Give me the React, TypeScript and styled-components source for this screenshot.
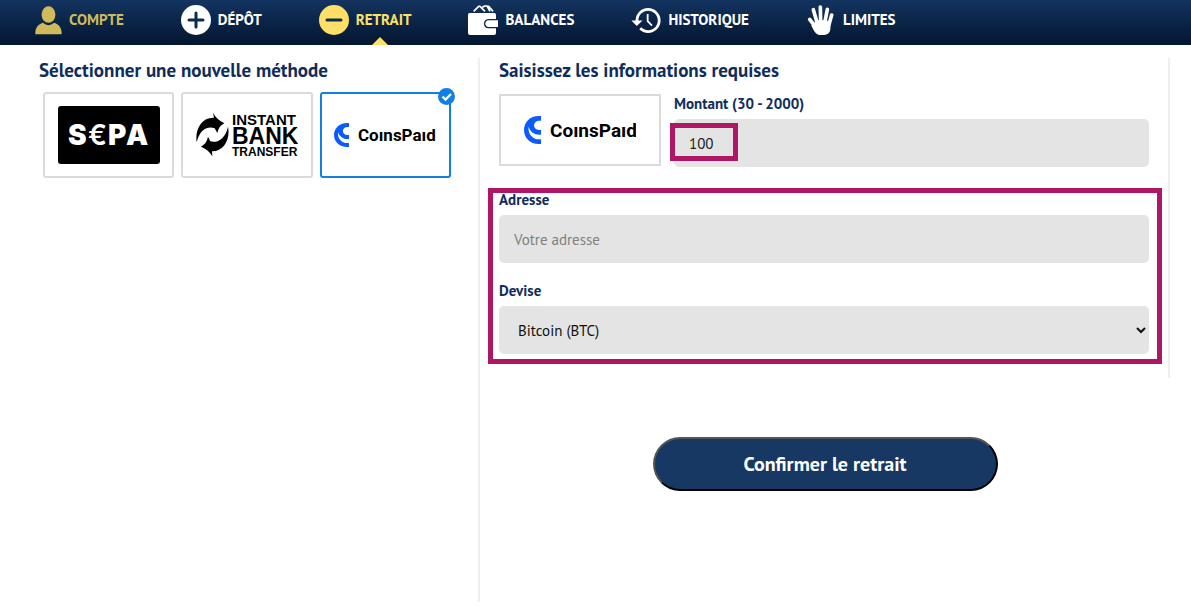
import React, { useState } from "react";
import styled, { createGlobalStyle } from "styled-components";

const navy = "#0f2d5c";
const yellow = "#ffe066";
const magenta = "#ae1765";

const GlobalStyle = createGlobalStyle`
  * { box-sizing: border-box; }
  body {
    margin: 0;
    background: #fff;
    font-family: "PT Sans", Lato, "Noto Sans", sans-serif;
    color: ${navy};
  }
  button, input, select { font-family: inherit; }
`;

const Nav = styled.nav`
  display: flex;
  gap: 57px;
  height: 45px;
  padding: 0 35px;
  background: linear-gradient(#133460, #0b2447 50%, #04162f);
`;

const NavLink = styled.a<{ $color: string }>`
  position: relative;
  display: flex;
  align-items: center;
  gap: 7px;
  height: 40px;
  color: ${(p) => p.$color};
  font-size: 15px;
  font-weight: 700;
  line-height: 20px;
  text-decoration: none;
  white-space: nowrap;
  svg { flex: none; }
`;

const ActiveMark = styled.span`
  position: absolute;
  top: 37px;
  left: 53px;
  border: 8px solid transparent;
  border-top: 0;
  border-bottom-color: ${yellow};
`;

const Main = styled.main`
  display: grid;
  grid-template-columns: 478fr 692fr;
  min-height: calc(100vh - 67px);
  margin: 13px 21px 9px 0;
`;

const Methods = styled.section`
  padding-left: 39px;
`;

const Title = styled.h2`
  margin: 0;
  font-size: 19px;
  font-weight: 700;
  line-height: 24px;
`;

const MethodList = styled.div`
  display: flex;
  gap: 7px;
  padding: 10px 27px 0 4px;
`;

const MethodCard = styled.button<{ $selected: boolean }>`
  position: relative;
  flex: 1;
  display: flex;
  align-items: center;
  justify-content: center;
  height: 86px;
  padding: 0;
  background: #fff;
  border: 2px solid ${(p) => (p.$selected ? "#127fe6" : "#dadada")};
  border-radius: 3px;
`;

const CheckBadge = styled.svg`
  position: absolute;
  top: -6px;
  right: -6px;
`;

const Details = styled.section`
  border-left: 2px solid #eef0f0;
`;

const Form = styled.form`
  padding: 0 19px 24px 19px;
  border-right: 2px solid #eee;
`;

const AmountRow = styled.div`
  display: flex;
  gap: 13px;
  margin: 12px 0 23px;
`;

const LogoBox = styled.div`
  display: flex;
  align-items: center;
  justify-content: center;
  width: 162px;
  height: 72px;
  border: 2px solid #dadada;
`;

const Field = styled.div<{ $grow?: boolean }>`
  position: relative;
  display: flex;
  flex-direction: column;
  gap: 5px;
  flex: ${(p) => (p.$grow ? 1 : "none")};
`;

const FieldGroup = styled.div`
  position: relative;
  display: flex;
  flex-direction: column;
  gap: 18px;
`;

const Label = styled.label`
  font-size: 15px;
  font-weight: 700;
  line-height: 20px;
`;

const Input = styled.input`
  width: 100%;
  height: 48px;
  padding: 0 15px;
  border: 0;
  border-radius: 5px;
  background: #e4e4e4;
  color: #222;
  font-size: 15px;
  &::placeholder { color: #808080; opacity: 1; }
`;

const Select = styled.select`
  width: 100%;
  height: 48px;
  padding: 0 15px;
  border: 0;
  border-radius: 5px;
  background: #e4e4e4;
  color: #111;
  font-size: 15px;
`;

const Highlight = styled.span<{ $inset: string }>`
  position: absolute;
  inset: ${(p) => p.$inset};
  border: 5px solid ${magenta};
  pointer-events: none;
`;

const AmountMark = styled(Highlight)`
  width: 68px;
`;

const Confirm = styled.button`
  display: block;
  width: 50%;
  height: 54px;
  margin: 59px auto 0;
  border: 2px outset #000;
  border-radius: 27px;
  background: #173862;
  color: #fff;
  font-size: 20px;
  font-weight: 700;
`;

const UserIcon = () => (
  <svg width="27" height="29" viewBox="0 0 82 86" fill="currentColor" aria-hidden="true">
    <ellipse cx="41" cy="25" rx="21" ry="25" />
    <path d="M1 85C0 67 8 55 24 50Q41 65 58 50C74 55 82 67 81 85Z" />
  </svg>
);

const CircleIcon = ({ plus }: { plus?: boolean }) => (
  <svg width="30" height="30" viewBox="0 0 30 30" aria-hidden="true">
    <circle cx="15" cy="15" r="15" fill="currentColor" />
    <path
      d={plus ? "M8 15h14M15 8v14" : "M8 15h14"}
      stroke="#0d2a50"
      strokeWidth="3"
      strokeLinecap="round"
    />
  </svg>
);

const WalletIcon = () => (
  <svg width="30" height="30" viewBox="0 0 90 90" aria-hidden="true">
    <path
      d="M17 19L32 4H36L51 19M43 7L50 3H57L66 19M58 4H62L75 19"
      fill="none"
      stroke="currentColor"
      strokeWidth="5"
      strokeLinejoin="round"
    />
    <path d="M5 24H79Q84 24 84 30V84Q84 90 78 90H6Q0 90 0 84V30Q0 24 5 24Z" fill="currentColor" />
    <path d="M92 44H62Q50 45 50 56Q50 67 62 68H92" fill="currentColor" stroke="#0b2447" strokeWidth="4" />
  </svg>
);

const HistoryIcon = () => (
  <svg width="30" height="25" viewBox="1 3 21 18" fill="currentColor" aria-hidden="true">
    <path d="M13 3a9 9 0 0 0-9 9H1l3.9 4L9 12H6c0-3.87 3.13-7 7-7s7 3.13 7 7-3.13 7-7 7c-1.93 0-3.68-.79-4.94-2.06l-1.42 1.42A8.95 8.95 0 0 0 13 21a9 9 0 0 0 0-18z" />
    <path d="M12.7 7.3v5.2l3.1 3.2" fill="none" stroke="currentColor" strokeWidth="1.3" />
  </svg>
);

const HandIcon = () => (
  <svg width="30" height="30" viewBox="-5 0 90 90" aria-hidden="true">
    <path
      d="M6 43L24 66M17 14L28 52M38 6L39 50M59 13L52 50M72 30L63 62"
      fill="none"
      stroke="currentColor"
      strokeWidth="11"
      strokeLinecap="round"
    />
    <path d="M22 46H58L68 58Q72 90 50 90H36Q24 90 15 70L10 60L20 62Z" fill="currentColor" />
  </svg>
);

const SepaLogo = () => (
  <svg width="102" height="58" viewBox="0 0 102 58" role="img" aria-label="SEPA">
    <rect width="102" height="58" rx="3" />
    <g fill="#fff" fontFamily="Inter, sans-serif" fontSize="28">
      <text x="10" y="39" fontWeight="900">S</text>
      <text x="30" y="39" fontWeight="600">€</text>
      <text x="50" y="39" fontWeight="900">P</text>
      <text x="68" y="39" fontWeight="900">A</text>
    </g>
  </svg>
);

const BankLogo = () => (
  <svg width="102" height="46" viewBox="0 0 102 46" role="img" aria-label="Instant Bank Transfer">
    <svg width="34" height="46" viewBox="18 21 102 138">
      <path d="M20 112C14 72 36 36 72 38L69 23C77 38 88 47 103 55C91 61 85 70 82 84L74 70C54 63 30 72 20 112Z" />
      <path d="M114 65C122 103 100 140 66 139L67 154C59 140 48 131 33 125C45 118 51 109 54 95L61 109C82 115 106 102 114 65Z" />
    </svg>
    <g fontFamily="'Liberation Sans', Arial, sans-serif" fontWeight="700">
      <text x="36" y="13" fontSize="15">INSTANT</text>
      <text x="36" y="32" fontSize="23">BANK</text>
      <text x="36" y="44" fontSize="12">TRANSFER</text>
    </g>
  </svg>
);

const CoinsPaidLogo = ({ large }: { large?: boolean }) => (
  <svg
    width={large ? 112 : 102}
    height={large ? 28 : 24}
    viewBox={large ? "0 0 112 28" : "0 0 102 24"}
    role="img"
    aria-label="CoinsPaid"
  >
    <svg width={large ? 17 : 15} height={large ? 28 : 24} viewBox="0 0 49 84" preserveAspectRatio="none">
      <path d="M49 0H42C18 0 0 18 0 42S18 84 42 84H49Z" fill="#0b5cff" />
      <path d="M49 14H44C35 14 29 20 29 28S35 42 44 42H49Z" fill="#fff" />
      <path d="M49 56H44C30 56 18 47 13 32C11 54 25 70 43 70H49Z" fill="#fff" />
    </svg>
    <text
      x={large ? 26 : 24}
      y={large ? 21 : 18}
      fontFamily="Roboto, sans-serif"
      fontWeight="700"
      fontSize={large ? 19 : 17}
    >
      CoınsPaıd
    </text>
  </svg>
);

const navItems = [
  { label: "COMPTE", color: "#cfbb5c", icon: <UserIcon /> },
  { label: "DÉPÔT", color: "#fff", icon: <CircleIcon plus /> },
  { label: "RETRAIT", color: yellow, icon: <CircleIcon />, active: true },
  { label: "BALANCES", color: "#fff", icon: <WalletIcon /> },
  { label: "HISTORIQUE", color: "#fff", icon: <HistoryIcon /> },
  { label: "LIMITES", color: "#fff", icon: <HandIcon /> },
];

const methods = [
  { id: "sepa", logo: <SepaLogo /> },
  { id: "bank", logo: <BankLogo /> },
  { id: "coinspaid", logo: <CoinsPaidLogo /> },
];

export default function App() {
  const [method, setMethod] = useState("coinspaid");

  return (
    <>
      <GlobalStyle />
      <Nav>
        {navItems.map((item) => (
          <NavLink key={item.label} href="#" $color={item.color} aria-current={item.active ? "page" : undefined}>
            {item.icon}
            {item.label}
            {item.active && <ActiveMark />}
          </NavLink>
        ))}
      </Nav>
      <Main>
        <Methods>
          <Title>Sélectionner une nouvelle méthode</Title>
          <MethodList>
            {methods.map(({ id, logo }) => (
              <MethodCard
                key={id}
                type="button"
                $selected={id === method}
                aria-pressed={id === method}
                onClick={() => setMethod(id)}
              >
                {logo}
                {id === method && (
                  <CheckBadge width="17" height="17" viewBox="0 0 17 17" aria-hidden="true">
                    <circle cx="8.5" cy="8.5" r="8.5" fill="#127fe6" />
                    <path d="M4.5 8.5L7.5 11.5L13 6" fill="none" stroke="#fff" strokeWidth="2.4" />
                  </CheckBadge>
                )}
              </MethodCard>
            ))}
          </MethodList>
        </Methods>
        <Details>
          <Form id="withdrawal" onSubmit={(e) => e.preventDefault()}>
            <Title>Saisissez les informations requises</Title>
            <AmountRow>
              <LogoBox>
                <CoinsPaidLogo large />
              </LogoBox>
              <Field $grow>
                <Label htmlFor="amount">Montant (30 - 2000)</Label>
                <Input id="amount" type="text" inputMode="numeric" defaultValue="100" />
                <AmountMark $inset="29px auto 6px -4px" />
              </Field>
            </AmountRow>
            <FieldGroup>
              <Field>
                <Label htmlFor="address">Adresse</Label>
                <Input id="address" type="text" placeholder="Votre adresse" />
              </Field>
              <Field>
                <Label htmlFor="currency">Devise</Label>
                <Select id="currency" defaultValue="btc">
                  <option value="btc">Bitcoin (BTC)</option>
                </Select>
              </Field>
              <Highlight $inset="-2px -13px -10px -11px" />
            </FieldGroup>
          </Form>
          <Confirm type="submit" form="withdrawal">
            Confirmer le retrait
          </Confirm>
        </Details>
      </Main>
    </>
  );
}
